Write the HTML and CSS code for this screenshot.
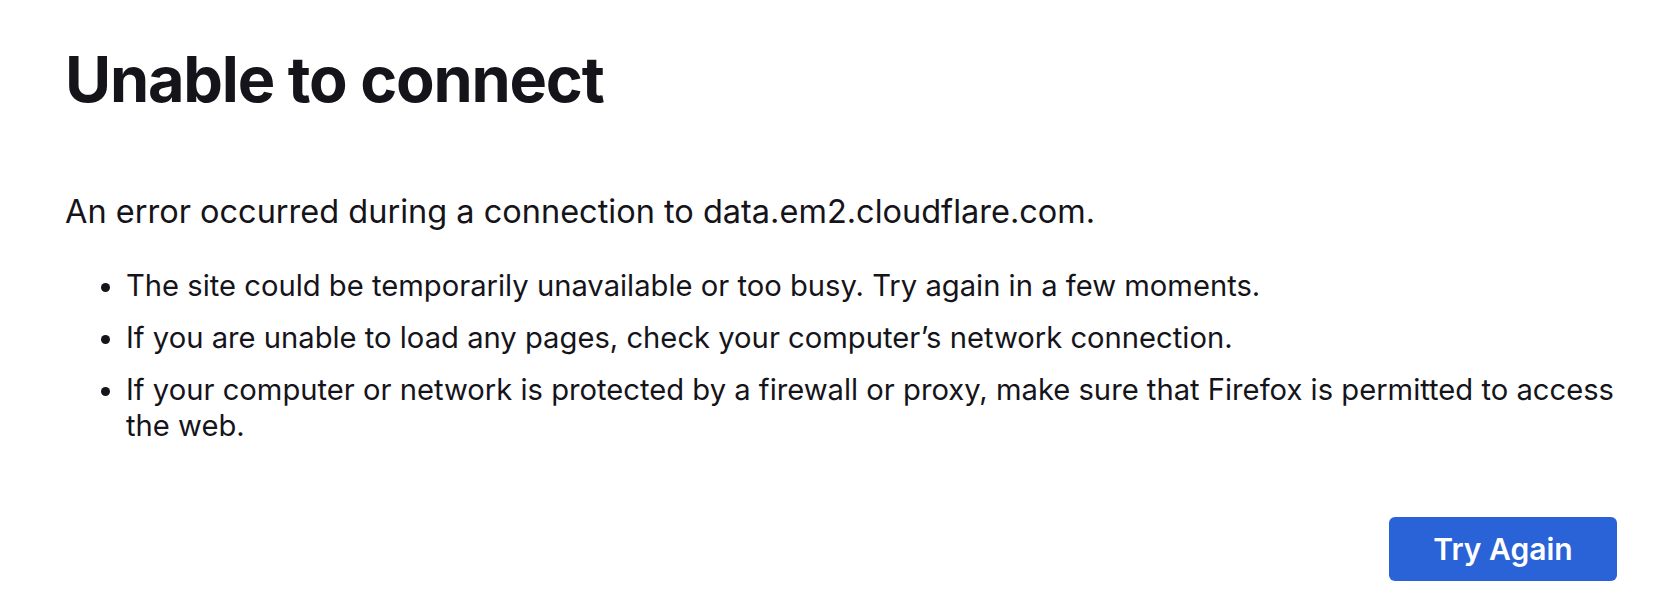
FILE: index.html
```html
<!DOCTYPE html>
<html lang="en">
<head>
<meta charset="utf-8">
<title>Problem loading page</title>
<link rel="stylesheet" href="styles.css">
</head>
<body>
<main class="page">
  <h1 class="title">Unable to connect</h1>
  <p class="intro">An error occurred during a connection to data.em2.cloudflare.com.</p>
  <ul class="reasons">
    <li>The site could be temporarily unavailable or too busy. Try again in a few moments.</li>
    <li>If you are unable to load any pages, check your computer’s network connection.</li>
    <li>If your computer or network is protected by a firewall or proxy, make sure that Firefox is permitted to access the web.</li>
  </ul>
  <div class="actions">
    <button class="try-again" type="button">Try Again</button>
  </div>
</main>
</body>
</html>
```

FILE: styles.css
```css
html, body {
  margin: 0;
  padding: 0;
  background: #ffffff;
}

body {
  font-family: Inter, "Noto Sans", "Liberation Sans", sans-serif;
  color: #15141a;
}

.page {
  padding: 40px 57px 0 65px;
  display: flex;
  flex-direction: column;
}

.title {
  margin: 0;
  font-size: 63px;
  font-weight: 700;
  line-height: 79px;
  letter-spacing: -1.2px;
}

.intro {
  margin: 73px 0 0;
  font-size: 32.5px;
  line-height: 39px;
}

.reasons {
  margin: 37px 0 0;
  padding-left: 61px;
  font-size: 29.2px;
  line-height: 36px;
}

.reasons li {
  margin-bottom: 16px;
}

.reasons li:last-child {
  margin-bottom: 0;
}

.actions {
  display: flex;
  justify-content: flex-end;
  margin-top: 73px;
}

.try-again {
  font-family: Inter, "Noto Sans", "Liberation Sans", sans-serif;
  font-size: 30px;
  font-weight: 600;
  line-height: 36px;
  white-space: nowrap;
  color: #ffffff;
  background: #2a62d8;
  border: none;
  border-radius: 6px;
  padding: 0;
  width: 228px;
  height: 64px;
}
```
